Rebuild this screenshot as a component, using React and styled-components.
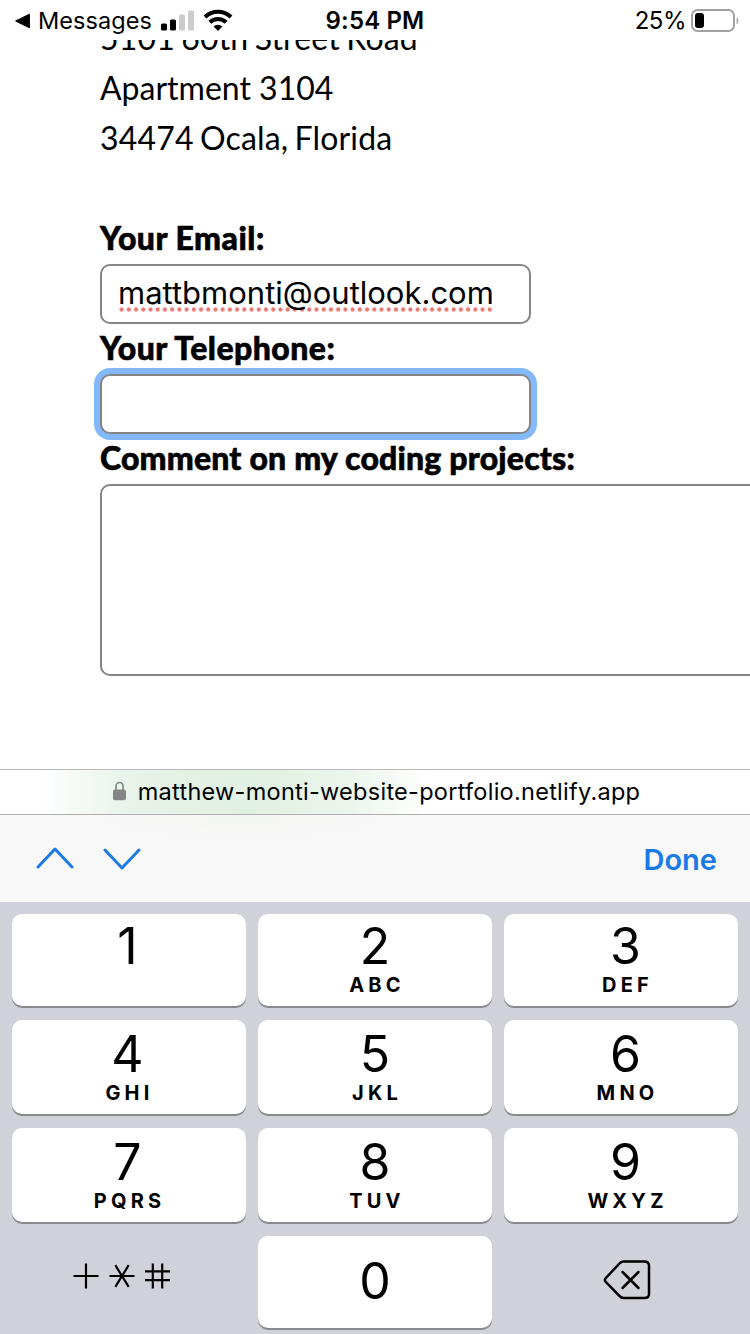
import React from "react";
import styled, { createGlobalStyle } from "styled-components";

const GlobalStyle = createGlobalStyle`
  * { box-sizing: border-box; }
  html, body { margin: 0; padding: 0; background: #fff; }
  body { width: 750px; height: 1334px; overflow: hidden; color: #000; }
`;

const ui = `Inter, "Liberation Sans", sans-serif`;

const Screen = styled.div`
  width: 750px;
  height: 1334px;
  display: flex;
  flex-direction: column;
  overflow: hidden;
  background: #fff;
  font-family: ${ui};
`;

const StatusBar = styled.header`
  height: 40px;
  flex: none;
  display: grid;
  grid-template-columns: 1fr auto 1fr;
  align-items: center;
  padding: 0 11px 0 14px;
  font-size: 24px;
  line-height: 40px;
`;

const StatusGroup = styled.div`
  display: flex;
  align-items: center;
  justify-content: ${(p) => (p.$end ? "flex-end" : "flex-start")};
`;

const BackLabel = styled.span`
  margin: 1px 9px 0 7px;
  font-size: 23.5px;
  letter-spacing: 0.05px;
`;

const Clock = styled.time`
  font-weight: 600;
  font-size: 24px;
  letter-spacing: 0.15px;
  margin: 1px 3px 0 0;
`;

const BatteryLevel = styled.span`
  margin: 1px 4px 0 0;
  font-size: 24px;
  letter-spacing: -0.5px;
`;

const Page = styled.main`
  height: 729px;
  flex: none;
  overflow: hidden;
  padding-left: 100px;
  font-family: Lato, sans-serif;
  font-size: 32px;
  line-height: 50px;
`;

const Address = styled.address`
  margin-top: -27px;
  margin-bottom: 50px;
  font-style: normal;
`;

const AddressLine = styled.div`
  letter-spacing: ${(p) => (p.$tightWords ? 0.16 : 0)}px;
  word-spacing: ${(p) => (p.$tightWords ? -2 : 0)}px;
  white-space: nowrap;
`;

const Label = styled.label`
  display: block;
  font-weight: 900;
  white-space: nowrap;
  -webkit-text-stroke: 0.6px #000;
  letter-spacing: ${(p) => p.$spacing || 0}px;
`;

const Field = styled.div`
  width: 431px;
  height: 60px;
  margin: 1px 0 -1px;
  padding: 0 16px;
  border: 2px solid #858587;
  border-radius: 10px;
  background: #fff;
  font-family: ${ui};
  font-size: 31px;
  line-height: 53px;
  box-shadow: ${(p) => (p.$focused ? "0 0 0 6px #83b9fa" : "none")};
`;

const Misspelled = styled.span`
  display: inline-block;
  height: 46px;
  background: radial-gradient(circle at 50% 50%, #ec7b75 1.8px, transparent 2.5px) 0 100% / 7.2px 5px round no-repeat;
`;

const CommentBox = styled.div`
  width: 720px;
  height: 192px;
  margin-top: 1px;
  border: 2px solid #858587;
  border-radius: 10px;
`;

const AddressBar = styled.div`
  height: 46px;
  flex: none;
  display: flex;
  align-items: center;
  justify-content: center;
  gap: 12px;
  padding: 0 0 2px 3px;
  border-top: 1px solid #b9bbbb;
  border-bottom: 1px solid #b0b0b1;
  background: linear-gradient(90deg, #fff 40px, #e8f3e9 130px, #e0f0e2 250px, #ecf5ec 350px, #fff 430px);
  font-size: 23.5px;
  letter-spacing: 0.27px;
`;

const Accessory = styled.div`
  height: 87px;
  flex: none;
  display: flex;
  align-items: center;
  justify-content: space-between;
  padding: 2px 33px 0 36px;
  background: radial-gradient(ellipse at 240px 0, #f4f6f3 0, #f8f8f8 190px);
  color: #1b7be6;
`;

const Arrows = styled.div`
  display: flex;
  gap: 29px;
  padding-bottom: 2px;
`;

const Done = styled.span`
  font-size: 29px;
  font-weight: 600;
`;

const Keyboard = styled.section`
  flex: 1;
  display: grid;
  grid-template-columns: repeat(3, 234px);
  grid-template-rows: 92px 94px 94px 92px;
  gap: 14px 12px;
  padding: 12px 12px 0;
  background: #d1d2d9;
`;

const Key = styled.div`
  display: flex;
  flex-direction: column;
  align-items: center;
  justify-content: ${(p) => (p.$centered ? "center" : "flex-start")};
  padding: ${(p) => p.$pad || "0"};
  border-radius: 10px;
  background: ${(p) => (p.$plain ? "transparent" : "#fff")};
  box-shadow: ${(p) => (p.$plain ? "none" : "0 2px 0 #88898d")};
`;

const Digit = styled.span`
  font-size: 50px;
  line-height: 56px;
`;

const Letters = styled.span`
  margin-top: -1px;
  padding-left: 4px;
  font-size: 20px;
  line-height: 24px;
  font-weight: 650;
  letter-spacing: 4.2px;
`;

const KEYS = [
  ["1", ""], ["2", "ABC"], ["3", "DEF"],
  ["4", "GHI"], ["5", "JKL"], ["6", "MNO"],
  ["7", "PQRS"], ["8", "TUV"], ["9", "WXYZ"],
];

const keyPadding = (i) => {
  const top = i < 3 ? 4 : 6;
  const column = i % 3;
  return `${top}px ${column === 0 ? 3 : 0}px 0 ${column === 2 ? 9 : 0}px`;
};

const BackTriangle = () => (
  <svg width="17" height="16" viewBox="0 0 17 16">
    <path d="M1.6 8 15.4 1.2V14.8Z" stroke="#000" strokeLinejoin="round" />
  </svg>
);

const Signal = () => (
  <svg width="34" height="22" viewBox="0 0 34 22">
    <rect x="0" y="13.5" width="6" height="7" rx="1.6" />
    <rect x="9" y="9.5" width="6" height="11" rx="1.6" />
    <rect x="18" y="4.5" width="6" height="16" rx="1.6" fill="#ccc" />
    <rect x="27" y="0.5" width="6" height="20" rx="1.6" fill="#ccc" />
  </svg>
);

const WifiIcon = styled.svg`
  margin-left: 8px;
`;

const Wifi = () => (
  <WifiIcon width="30" height="23" viewBox="0 0 30 23">
    <g fill="none" stroke="#000" strokeWidth="4">
      <path d="M2 8a18.7 18.7 0 0 1 26 0" />
      <path d="M6.8 13.3a11.8 11.8 0 0 1 16.4 0" />
    </g>
    <path d="M15 22l-4.4-4.4a6.2 6.2 0 0 1 8.8 0Z" />
  </WifiIcon>
);

const Battery = () => (
  <svg width="49" height="24" viewBox="0 0 49 24">
    <rect x="2" y="1" width="42" height="21" rx="5.5" fill="none" stroke="#a1a1a1" strokeWidth="2" />
    <rect x="5" y="4" width="9" height="15" rx="3" />
    <path d="M46.6 8.2c2.4 1 2.4 6 0 7Z" fill="#a1a1a1" />
  </svg>
);

const Lock = () => (
  <svg width="13" height="20" viewBox="0 0 13 20">
    <path d="M3 9V5a3.5 3.5 0 0 1 7 0V9" fill="none" stroke="#858786" strokeWidth="1.7" />
    <rect x="0" y="8.4" width="13" height="10.8" rx="1.8" fill="#858786" />
  </svg>
);

const Chevron = ({ down }) => (
  <svg width="38" height="24" viewBox="0 0 38 24" fill="none" stroke="currentColor" strokeWidth="3" strokeLinecap="round" strokeLinejoin="round">
    <path d={down ? "M2 3 19 21 36 3" : "M2 20 19 2 36 20"} />
  </svg>
);

const Symbols = () => (
  <svg width="98" height="26" viewBox="0 0 98 26" fill="none" stroke="#000" strokeWidth="2.2" role="img" aria-label="+ * #">
    <path d="M.5 13H25.5M13 .5V25.5" />
    <path d="M36.5 13H61.5M42.3 2.2 55.7 23.8M55.7 2.2 42.3 23.8" />
    <path d="M72 8.3H97M72 17.2H97M79.8.5V25.5M89.2.5V25.5" />
  </svg>
);

const Backspace = () => (
  <svg width="48" height="40" viewBox="0 0 48 40" fill="none" stroke="#000" strokeWidth="2.5" strokeLinecap="round" strokeLinejoin="round">
    <path d="M20.5 1.5H41.5Q46 1.5 46 6V34Q46 38 41.5 38H20.5Q18.5 38 17 36.5L2.8 22Q1 20 2.8 18L17 3Q18.5 1.5 20.5 1.5Z" />
    <path d="M19.5 12 35.5 28M35.5 12 19.5 28" />
  </svg>
);

export default function App() {
  return (
    <Screen>
      <GlobalStyle />
      <StatusBar>
        <StatusGroup>
          <BackTriangle />
          <BackLabel>Messages</BackLabel>
          <Signal />
          <Wifi />
        </StatusGroup>
        <Clock>9:54 PM</Clock>
        <StatusGroup $end>
          <BatteryLevel>25%</BatteryLevel>
          <Battery />
        </StatusGroup>
      </StatusBar>
      <Page>
        <Address>
          <AddressLine $tightWords>5101 60th Street Road</AddressLine>
          <AddressLine>Apartment 3104</AddressLine>
          <AddressLine $tightWords>34474 Ocala, Florida</AddressLine>
        </Address>
        <Label $spacing={0.5}>Your Email:</Label>
        <Field><Misspelled>mattbmonti@outlook.com</Misspelled></Field>
        <Label $spacing={0.45}>Your Telephone:</Label>
        <Field $focused />
        <Label $spacing={0.18}>Comment on my coding projects:</Label>
        <CommentBox />
      </Page>
      <AddressBar>
        <Lock />
        <span>matthew-monti-website-portfolio.netlify.app</span>
      </AddressBar>
      <Accessory>
        <Arrows><Chevron /><Chevron down /></Arrows>
        <Done>Done</Done>
      </Accessory>
      <Keyboard>
        {KEYS.map(([digit, letters], i) => (
          <Key key={digit} $pad={keyPadding(i)}>
            <Digit>{digit}</Digit>
            {letters && <Letters>{letters}</Letters>}
          </Key>
        ))}
        <Key $plain $centered $pad="0 14px 12px 0"><Symbols /></Key>
        <Key $centered $pad="0 0 2px"><Digit>0</Digit></Key>
        <Key $plain $centered $pad="0 0 4px 11px"><Backspace /></Key>
      </Keyboard>
    </Screen>
  );
}
